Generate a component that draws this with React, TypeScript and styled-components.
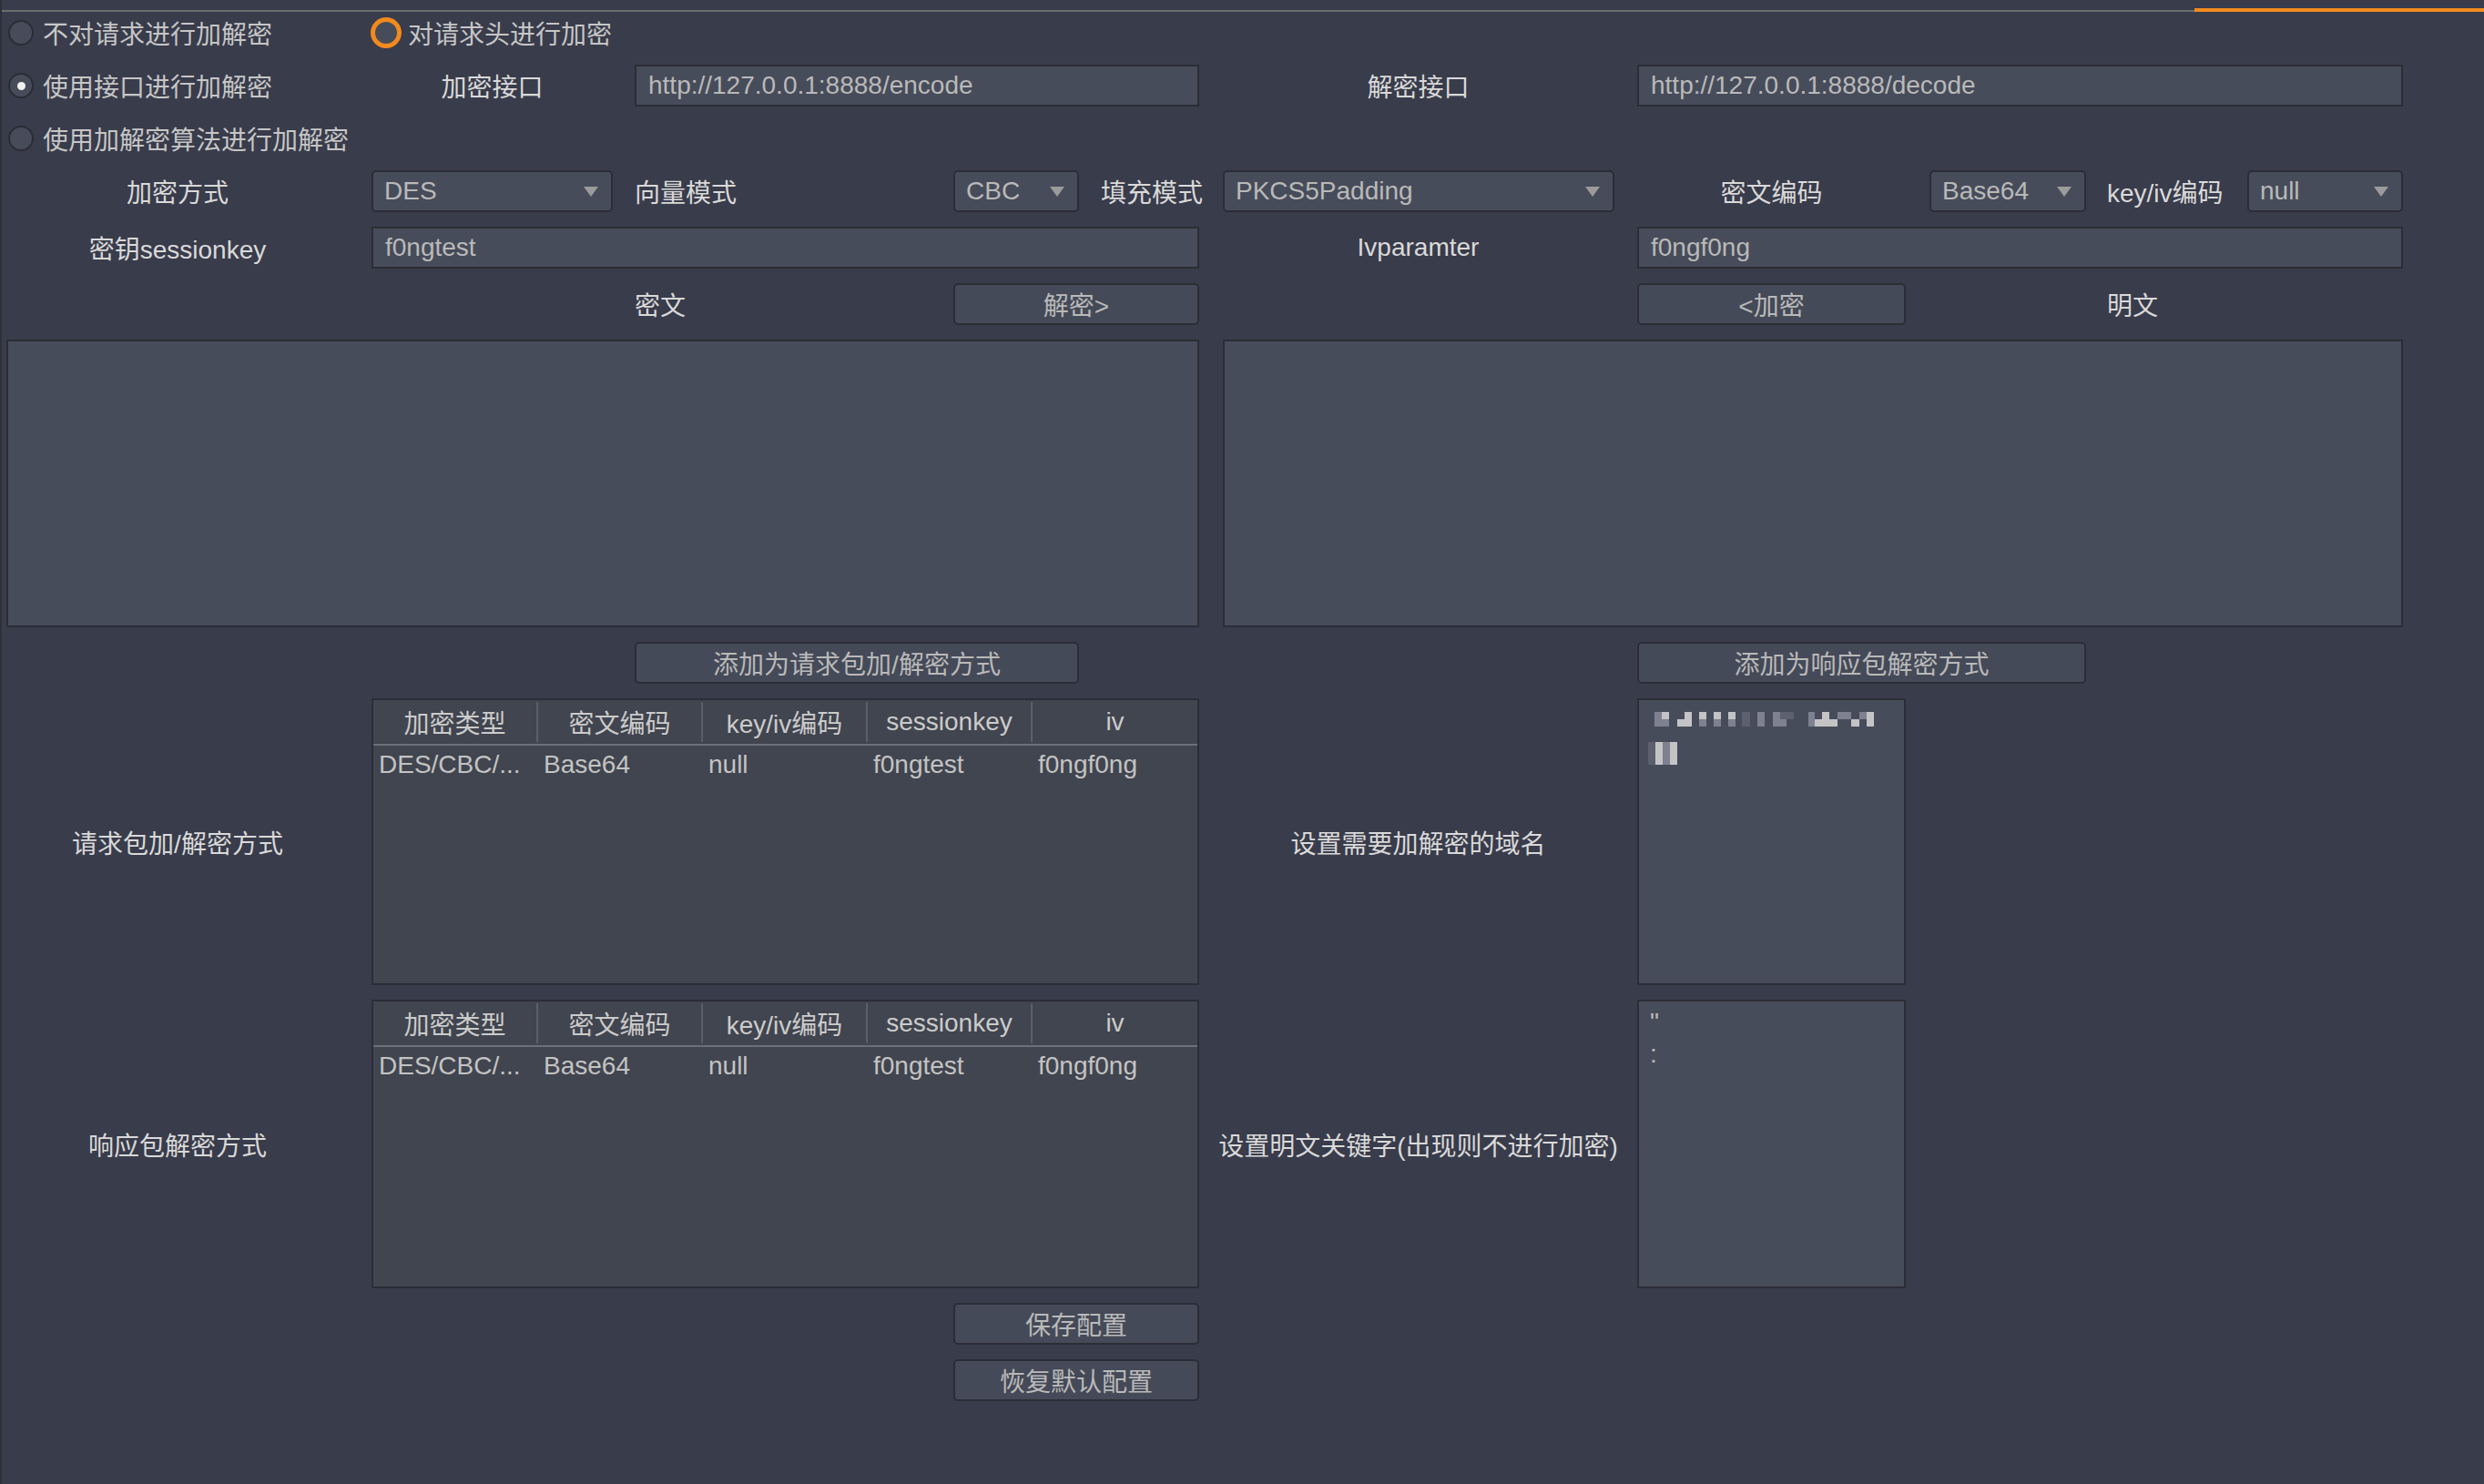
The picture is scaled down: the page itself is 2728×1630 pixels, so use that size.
import React from "react";
import styled, { createGlobalStyle, css } from "styled-components";

const C = {
  bg: "#393c4b",
  field: "#474c5a",
  table: "#41454f",
  button: "#454a58",
  edge: "#2b2d36",
  label: "#d9d9d9",
  text: "#b9b9b9",
  radioText: "#c6c6c6",
  orange: "#f28a1e",
};

const GlobalStyle = createGlobalStyle`
  * { box-sizing: border-box; }
  html, body { margin: 0; padding: 0; background: ${C.bg}; }
  body {
    font-family: "Liberation Sans", "Noto Sans CJK SC", sans-serif;
    font-size: 28px;
  }
`;

type Place = { $col: string; $row: number };
const place = css<Place>`
  grid-column: ${(p) => p.$col};
  grid-row: ${(p) => p.$row};
`;

const Page = styled.div`
  width: 2728px;
  height: 1630px;
  background: ${C.bg};
  border-left: 2px solid #2d2f39;
  overflow: hidden;
`;

const TabStrip = styled.div`
  height: 13px;
  display: flex;
  align-items: flex-end;
`;
const TabRule = styled.div`
  flex: 1;
  height: 2px;
  background: #6c6c6c;
`;
const TabActive = styled.div`
  width: 318px;
  height: 4px;
  background: ${C.orange};
`;

const columns =
  "5px 401px 265px 24px 350px 138px 24px 108px 26px 430px 25px 295px 26px 172px 23px 154px 171px 1fr";

const TopGrid = styled.div`
  display: grid;
  grid-template-columns: ${columns};
  grid-template-rows: repeat(4, 46px);
  row-gap: 12px;
`;

const MainGrid = styled.div`
  display: grid;
  grid-template-columns: ${columns};
  grid-template-rows: 46px 46px 316px 46px 315px 317px 46px 46px;
  row-gap: 16px;
  margin-top: 16px;
`;

const RadioItem = styled.label<Place>`
  ${place}
  display: flex;
  align-items: center;
  gap: 10px;
  padding-left: 2px;
  white-space: nowrap;
  color: ${C.radioText};
`;

const RadioDot = styled.span<{ $checked?: boolean; $focus?: boolean }>`
  flex: none;
  width: 28px;
  height: 28px;
  border-radius: 50%;
  background: ${C.field};
  border: 2px solid ${C.edge};
  display: flex;
  align-items: center;
  justify-content: center;
  ${(p) =>
    p.$focus &&
    css`
      border-color: ${C.orange};
      box-shadow: 0 0 0 3px ${C.orange};
    `}
  &::after {
    content: "";
    width: 9px;
    height: 9px;
    border-radius: 50%;
    background: #f2f2f2;
    display: ${(p) => (p.$checked ? "block" : "none")};
  }
`;

const Label = styled.div<Place & { $align?: "start" | "center" }>`
  ${place}
  align-self: center;
  justify-self: ${(p) => (p.$align === "start" ? "start" : "center")};
  white-space: nowrap;
  color: ${C.label};
`;

const SideLabel = styled.div<Place>`
  ${place}
  align-self: center;
  justify-self: center;
  padding-right: 20px;
  white-space: nowrap;
  color: ${C.label};
`;

const TextField = styled.div<Place>`
  ${place}
  display: flex;
  align-items: center;
  padding-left: 13px;
  background: ${C.field};
  border: 2px solid ${C.edge};
  color: ${C.text};
  white-space: nowrap;
  overflow: hidden;
`;

const SelectBox = styled.div<Place>`
  ${place}
  display: flex;
  align-items: center;
  justify-content: space-between;
  padding: 0 14px 0 12px;
  background: ${C.field};
  border: 2px solid ${C.edge};
  border-radius: 5px;
  color: ${C.text};
  white-space: nowrap;
`;

const Button = styled.button<Place>`
  ${place}
  font: inherit;
  color: ${C.text};
  background: ${C.button};
  border: 2px solid ${C.edge};
  border-radius: 5px;
  padding: 0;
  white-space: nowrap;
  cursor: pointer;
`;

const TextBox = styled.div<Place>`
  ${place}
  background: ${C.field};
  border: 2px solid ${C.edge};
  padding: 5px 12px;
  color: ${C.text};
  white-space: pre;
  line-height: 35px;
  overflow: hidden;
`;

const Table = styled.div<Place>`
  ${place}
  display: flex;
  flex-direction: column;
  background: ${C.table};
  border: 2px solid ${C.edge};
  overflow: hidden;
`;

const HeadRow = styled.div`
  display: grid;
  grid-template-columns: repeat(5, 1fr);
  height: 50px;
  padding: 2px 0;
  border-bottom: 2px solid #6b6f79;
`;

const HeadCell = styled.div`
  display: flex;
  align-items: center;
  justify-content: center;
  color: #cbcbcb;
  white-space: nowrap;
  border-right: 2px solid #5b5f69;
  &:last-child {
    border-right: none;
  }
`;

const BodyRow = styled.div`
  display: grid;
  grid-template-columns: repeat(5, 1fr);
  height: 42px;
  align-items: center;
`;

const BodyCell = styled.div`
  padding-left: 6px;
  color: #c3c3c3;
  white-space: nowrap;
  overflow: hidden;
`;

const Caret = () => (
  <svg width="16" height="11" viewBox="0 0 16 11">
    <path d="M0 0H16L8 11Z" fill="#9b9b9b" />
  </svg>
);

const Select = ({ value, $col, $row }: { value: string } & Place) => (
  <SelectBox $col={$col} $row={$row}>
    <span>{value}</span>
    <Caret />
  </SelectBox>
);

const heads = ["加密类型", "密文编码", "key/iv编码", "sessionkey", "iv"];
const rowData = ["DES/CBC/...", "Base64", "null", "f0ngtest", "f0ngf0ng"];

const CipherTable = ({ $col, $row }: Place) => (
  <Table $col={$col} $row={$row}>
    <HeadRow>
      {heads.map((h) => (
        <HeadCell key={h}>{h}</HeadCell>
      ))}
    </HeadRow>
    <BodyRow>
      {rowData.map((d) => (
        <BodyCell key={d}>{d}</BodyCell>
      ))}
    </BodyRow>
  </Table>
);

// redacted (pixelated) domain list, drawn as mosaic cells
const L = "#c4c4c6";
const M = "#7d8190";
const F = "#5c6170";
const mosaic: [number, number, number, number, string][] = [
  [17, 13, 8, 16, M],
  [25, 13, 8, 8, L],
  [25, 21, 8, 8, M],
  [42, 21, 16, 8, L],
  [50, 13, 8, 8, L],
  [66, 13, 8, 8, L],
  [66, 21, 8, 8, M],
  [82, 13, 8, 8, L],
  [82, 21, 8, 8, M],
  [98, 13, 8, 8, L],
  [98, 21, 8, 8, M],
  [113, 13, 9, 16, F],
  [130, 13, 8, 16, M],
  [147, 13, 8, 16, M],
  [155, 13, 7, 8, F],
  [155, 21, 7, 8, M],
  [162, 13, 8, 8, F],
  [186, 13, 7, 16, M],
  [193, 21, 25, 8, L],
  [201, 13, 8, 8, L],
  [218, 13, 15, 8, M],
  [233, 21, 9, 8, L],
  [242, 13, 8, 8, M],
  [250, 13, 8, 16, L],
  [10, 46, 8, 25, F],
  [18, 46, 8, 25, L],
  [26, 46, 8, 25, M],
  [34, 46, 8, 25, L],
];

const Mosaic = () => (
  <svg width="280" height="80" viewBox="0 0 280 80" style={{ display: "block", margin: "-5px -12px" }}>
    {mosaic.map(([x, y, w, h, c], i) => (
      <rect key={i} x={x} y={y} width={w} height={h} fill={c} />
    ))}
  </svg>
);

export default function App() {
  return (
    <Page>
      <GlobalStyle />
      <TabStrip>
        <TabRule />
        <TabActive />
      </TabStrip>

      <TopGrid>
        <RadioItem $col="2 / 3" $row={1}>
          <RadioDot />
          不对请求进行加解密
        </RadioItem>
        <RadioItem $col="3 / 6" $row={1}>
          <RadioDot $focus />
          对请求头进行加密
        </RadioItem>

        <RadioItem $col="2 / 3" $row={2}>
          <RadioDot $checked />
          使用接口进行加解密
        </RadioItem>
        <Label $col="3 / 4" $row={2}>加密接口</Label>
        <TextField $col="5 / 9" $row={2}>http://127.0.0.1:8888/encode</TextField>
        <Label $col="9 / 12" $row={2}>解密接口</Label>
        <TextField $col="12 / 18" $row={2}>http://127.0.0.1:8888/decode</TextField>

        <RadioItem $col="2 / 5" $row={3}>
          <RadioDot />
          使用加解密算法进行加解密
        </RadioItem>

        <SideLabel $col="1 / 3" $row={4}>加密方式</SideLabel>
        <Select $col="3 / 4" $row={4} value="DES" />
        <Label $col="5 / 6" $row={4} $align="start">向量模式</Label>
        <Select $col="6 / 7" $row={4} value="CBC" />
        <Label $col="8 / 9" $row={4} $align="start">填充模式</Label>
        <Select $col="10 / 11" $row={4} value="PKCS5Padding" />
        <Label $col="12 / 13" $row={4}>密文编码</Label>
        <Select $col="14 / 15" $row={4} value="Base64" />
        <Label $col="16 / 17" $row={4} $align="start">key/iv编码</Label>
        <Select $col="17 / 18" $row={4} value="null" />
      </TopGrid>

      <MainGrid>
        <SideLabel $col="1 / 3" $row={1}>密钥sessionkey</SideLabel>
        <TextField $col="3 / 9" $row={1}>f0ngtest</TextField>
        <Label $col="9 / 12" $row={1}>Ivparamter</Label>
        <TextField $col="12 / 18" $row={1}>f0ngf0ng</TextField>

        <Label $col="5 / 6" $row={2} $align="start">密文</Label>
        <Button $col="6 / 9" $row={2}>解密&gt;</Button>
        <Button $col="12 / 13" $row={2}>&lt;加密</Button>
        <Label $col="16 / 17" $row={2} $align="start">明文</Label>

        <TextBox $col="2 / 9" $row={3} />
        <TextBox $col="10 / 18" $row={3} />

        <Button $col="5 / 7" $row={4}>添加为请求包加/解密方式</Button>
        <Button $col="12 / 15" $row={4}>添加为响应包解密方式</Button>

        <SideLabel $col="1 / 3" $row={5}>请求包加/解密方式</SideLabel>
        <CipherTable $col="3 / 9" $row={5} />
        <Label $col="9 / 12" $row={5}>设置需要加解密的域名</Label>
        <TextBox $col="12 / 13" $row={5}>
          <Mosaic />
        </TextBox>

        <SideLabel $col="1 / 3" $row={6}>响应包解密方式</SideLabel>
        <CipherTable $col="3 / 9" $row={6} />
        <Label $col="9 / 12" $row={6}>设置明文关键字(出现则不进行加密)</Label>
        <TextBox $col="12 / 13" $row={6}>{'"\n:'}</TextBox>

        <Button $col="6 / 9" $row={7}>保存配置</Button>
        <Button $col="6 / 9" $row={8}>恢复默认配置</Button>
      </MainGrid>
    </Page>
  );
}
